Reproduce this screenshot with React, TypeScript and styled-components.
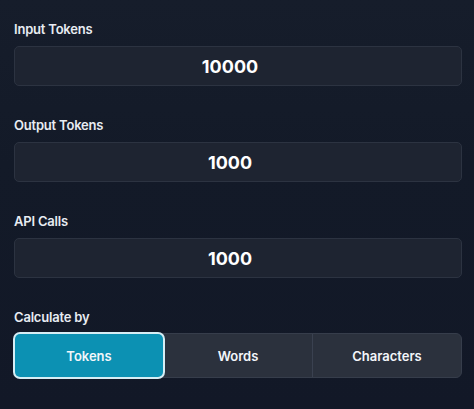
import React, { useState } from "react";
import styled, { createGlobalStyle } from "styled-components";

const Global = createGlobalStyle`
  html, body { margin: 0; padding: 0; background: #131a28; }
  body { font-family: Inter, "Noto Sans", sans-serif; color: #f1f5f9; }
  * { box-sizing: border-box; }
`;

const Page = styled.div`
  width: 474px;
  height: 409px;
  padding: 19px 12px 0 14px;
  background: linear-gradient(180deg, #161d2b 0%, #131a28 40%, #121827 100%);
  display: flex;
  flex-direction: column;
  gap: 29px;
`;

const Field = styled.div`
  display: flex;
  flex-direction: column;
  gap: 7px;
`;

const Label = styled.label`
  font-size: 13px;
  font-weight: 600;
  letter-spacing: -0.2px;
  line-height: 20px;
  color: #e8ecf2;
`;

const Input = styled.input`
  height: 40px;
  width: 100%;
  background: #1e2431;
  border: 1px solid #2c3341;
  border-radius: 5px;
  color: #ffffff;
  font-family: Inter, "Noto Sans", sans-serif;
  font-size: 18px;
  font-weight: 700;
  text-align: center;
  outline: none;
  padding: 0 26px 0 10px;
`;

const Group = styled.div`
  display: flex;
  height: 45px;
  border: 1px solid #363d4b;
  border-radius: 6px;
  background: #2b313d;
  margin-top: -1px;
`;

const Option = styled.button<{ $active?: boolean }>`
  flex: 1;
  border: none;
  border-left: 1px solid #3a4150;
  background: ${(p) => (p.$active ? "#0c91b3" : "transparent")};
  color: #f3f6fa;
  font-family: Inter, "Noto Sans", sans-serif;
  font-size: 13px;
  font-weight: 600;
  cursor: pointer;
  &:first-child {
    border-left: none;
    border-radius: 5px 0 0 5px;
  }
  &:last-child {
    border-radius: 0 5px 5px 0;
  }
  ${(p) =>
    p.$active &&
    `
    box-shadow: 0 0 0 2px #d6eef5;
    position: relative;
    z-index: 1;
    border-radius: 5px !important;
  `}
`;

export default function App() {
  const [mode, setMode] = useState("Tokens");
  const fields = [
    ["Input Tokens", "10000"],
    ["Output Tokens", "1000"],
    ["API Calls", "1000"],
  ];
  return (
    <>
      <Global />
      <Page>
        {fields.map(([l, v]) => (
          <Field key={l}>
            <Label>{l}</Label>
            <Input defaultValue={v} />
          </Field>
        ))}
        <Field>
          <Label>Calculate by</Label>
          <Group>
            {["Tokens", "Words", "Characters"].map((o) => (
              <Option key={o} $active={mode === o} onClick={() => setMode(o)}>
                {o}
              </Option>
            ))}
          </Group>
        </Field>
      </Page>
    </>
  );
}
